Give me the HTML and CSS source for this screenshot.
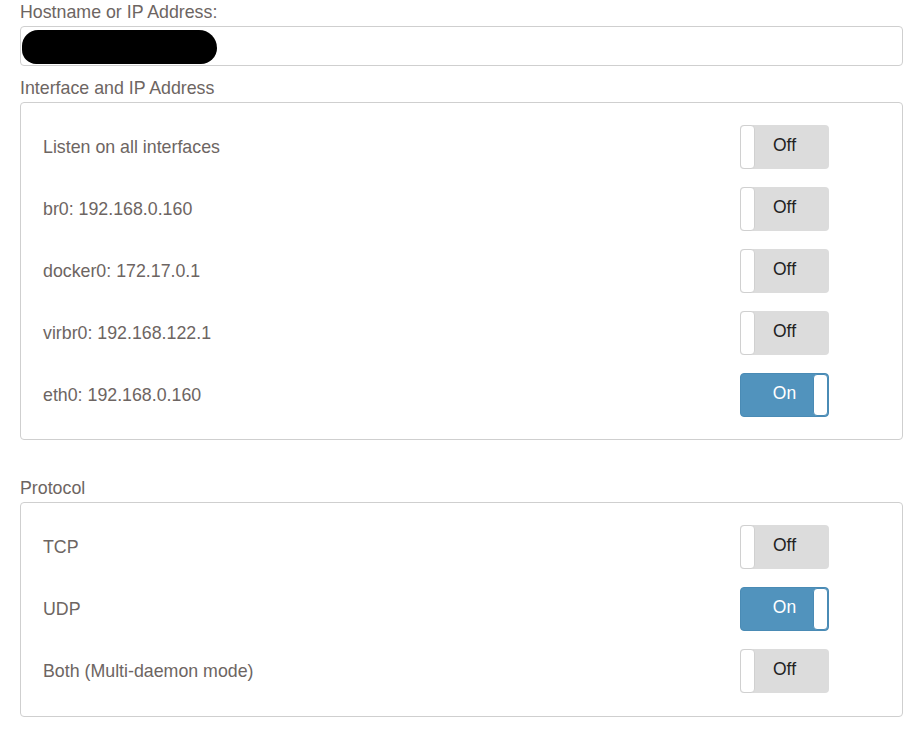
FILE: index.html
```html
<!DOCTYPE html>
<html lang="en">
<head>
  <meta charset="UTF-8" />
  <meta name="viewport" content="width=device-width, initial-scale=1.0" />
  <title>Network Settings</title>
  <link rel="stylesheet" href="styles.css">
</head>
<body>

<div class="field">
  <label class="field-label">Hostname or IP Address:</label>
  <div class="text-input"><span class="redacted"></span></div>
</div>

<div class="field">
  <label class="field-label">Interface and IP Address</label>
  <div class="group">
    <div class="row"><span>Listen on all interfaces</span><div class="toggle off"><span>Off</span></div></div>
    <div class="row"><span>br0: 192.168.0.160</span><div class="toggle off"><span>Off</span></div></div>
    <div class="row"><span>docker0: 172.17.0.1</span><div class="toggle off"><span>Off</span></div></div>
    <div class="row"><span>virbr0: 192.168.122.1</span><div class="toggle off"><span>Off</span></div></div>
    <div class="row"><span>eth0: 192.168.0.160</span><div class="toggle on"><span>On</span></div></div>
  </div>
</div>

<div class="field spaced">
  <label class="field-label">Protocol</label>
  <div class="group last">
    <div class="row"><span>TCP</span><div class="toggle off"><span>Off</span></div></div>
    <div class="row"><span>UDP</span><div class="toggle on"><span>On</span></div></div>
    <div class="row"><span>Both (Multi-daemon mode)</span><div class="toggle off"><span>Off</span></div></div>
  </div>
</div>

</body>
</html>
```

FILE: styles.css
```css
body {
  margin: 0;
  padding: 2px 8px 0 20px;
  font-family: "Liberation Sans", Arial, sans-serif;
  font-size: 16px;
  color: #6d6562;
  background: #fff;
}

.field {
  margin-bottom: 12px;
}

.field.spaced {
  margin-top: 38px;
}

.field-label {
  display: block;
  font-size: 17.8px;
  line-height: 20px;
  margin-bottom: 4px;
}

.text-input {
  height: 40px;
  box-sizing: border-box;
  border: 1px solid #cfcfcf;
  border-radius: 4px;
  padding: 3px 1px;
}

.redacted {
  display: block;
  width: 195px;
  height: 34px;
  background: #000;
  border-radius: 17px 19px 17px 15px;
}

.group {
  border: 1px solid #cfcfcf;
  border-radius: 4px;
  padding: 22px 73px 22px 22px;
  display: flex;
  flex-direction: column;
  gap: 18px;
}

.group.last {
  padding-bottom: 23px;
}

.row {
  display: flex;
  justify-content: space-between;
  align-items: center;
  height: 44px;
  font-size: 17.8px;
}

.toggle {
  position: relative;
  box-sizing: border-box;
  width: 89px;
  height: 44px;
  border-radius: 4px;
  display: flex;
  align-items: center;
  justify-content: center;
  font-size: 17.5px;
}

.toggle span {
  margin-top: -4px;
}

.toggle::before {
  content: "";
  position: absolute;
  top: 0;
  bottom: 0;
  width: 13px;
  background: #fff;
  border: 1px solid #d0d0d0;
  border-radius: 4px;
}

.toggle.off {
  background: #dcdcdc;
  color: #222;
}

.toggle.off::before {
  left: 0;
}

.toggle.on {
  background: #5193bd;
  border: 1px solid #4a8bb5;
  color: #fff;
}

.toggle.on::before {
  right: 0;
  border-color: #4a8bb5;
}
```
